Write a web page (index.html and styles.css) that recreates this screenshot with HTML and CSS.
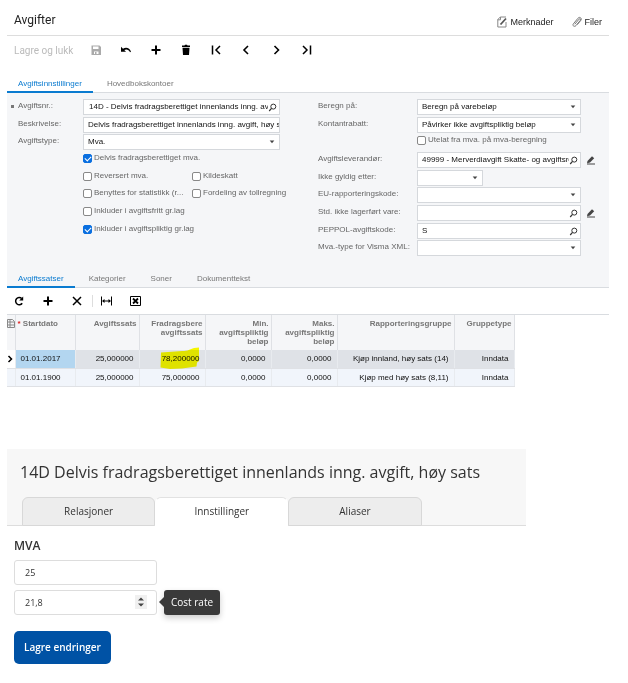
FILE: index.html
```html
<!DOCTYPE html>
<html lang="no">
  <head>
    <meta charset="UTF-8" />
    <meta name="viewport" content="width=device-width, initial-scale=1.0" />
    <title>Avgifter</title>
    <link rel="stylesheet" href="styles.css">
  </head>
  <body>
    <svg class="sprite" aria-hidden="true">
      <symbol id="search" viewBox="0 0 9 9">
        <circle cx="5.3" cy="3.6" r="2.5" fill="none" stroke="#333" stroke-width="1" />
        <path d="M3.5 5.4 1.2 8" stroke="#333" stroke-width="1.2" />
      </symbol>
      <symbol id="pencil" viewBox="0 0 10 10">
        <path d="M1.5 6 6 1.2 8.2 3.2 4 7.6 1 8.2z" fill="#444" />
        <path d="M1 9h8" stroke="#444" stroke-width="1" />
      </symbol>
      <symbol id="plus" viewBox="0 0 12 12">
        <path d="M6 1.5v9M1.5 6h9" stroke="#000" stroke-width="2" />
      </symbol>
      <symbol id="caret" viewBox="0 0 6 4">
        <path d="M.7.5h4.6L3 3.3z" fill="#444" />
      </symbol>
    </svg>

    <main class="tax">
      <header class="tax-header">
        <h1>Avgifter</h1>
        <a href="#" class="header-link">
          <svg width="10" height="12" viewBox="0 0 10 12" fill="none" stroke="#888">
            <path d="M9 6v5H.8V3.5L3.3 1H9M.8 3.8h2.7V1" />
            <path d="M3.5 8.5 9 2.5" stroke="#555" stroke-width="1.8" />
          </svg>
          Merknader
        </a>
        <a href="#" class="header-link">
          <svg width="10" height="12" viewBox="0 0 10 12" fill="none" stroke="#777">
            <path d="M2.8 8.2 7 3.2c1-1 2.2 0 1.3 1.2L4 9.6c-1.6 1.7-4 .1-2.6-1.8L6 2.2C7.7.2 10.3 2.3 8.8 4.4L5.3 8.6" />
          </svg>
          Filer
        </a>
      </header>

      <div class="toolbar">
        <button class="save-close" disabled>Lagre og lukk</button>
        <button class="tool" disabled aria-label="Lagre">
          <svg width="12" height="12" viewBox="0 0 12 12">
            <path d="M1.5 1.5h8L11 3v8H1.5z" fill="#aaa" />
            <path d="M3 2.5h5.5V5H3zM4 7.5h4.5V10H4z" fill="#fff" />
            <path d="M5 8h1.5v2H5z" fill="#aaa" />
          </svg>
        </button>
        <button class="tool" aria-label="Angre">
          <svg width="12" height="12" viewBox="0 0 12 12">
            <path d="M1 2.8v5h5L4.3 6c2-1.2 4.6-.6 5.7 2.3l1-.6C9.8 4 6 2.8 3 4.8z" />
          </svg>
        </button>
        <button class="tool" aria-label="Ny"><svg width="12" height="12"><use href="#plus" /></svg></button>
        <button class="tool" aria-label="Slett">
          <svg width="12" height="12" viewBox="0 0 12 12">
            <path d="M2 1.6h2.5l.5-.8h2l.5.8H10V3H2zM2.5 3.7h7L9 11H3z" />
          </svg>
        </button>
        <button class="tool" aria-label="Første">
          <svg width="12" height="12" viewBox="0 0 12 12" fill="none" stroke="#000" stroke-width="1.5">
            <path d="M2.5 1.5v9M10 2 6 6l4 4" />
          </svg>
        </button>
        <button class="tool" aria-label="Forrige">
          <svg width="12" height="12" viewBox="0 0 12 12" fill="none" stroke="#000" stroke-width="1.6">
            <path d="M8 2 4 6l4 4" />
          </svg>
        </button>
        <button class="tool" aria-label="Neste">
          <svg width="12" height="12" viewBox="0 0 12 12" fill="none" stroke="#000" stroke-width="1.6">
            <path d="M4.5 2l4 4-4 4" />
          </svg>
        </button>
        <button class="tool" aria-label="Siste">
          <svg width="12" height="12" viewBox="0 0 12 12" fill="none" stroke="#000" stroke-width="1.5">
            <path d="M3 2l4 4-4 4M10.5 1.5v9" />
          </svg>
        </button>
      </div>

      <nav class="tabs">
        <a href="#" class="tab active">Avgiftsinnstillinger</a>
        <a href="#" class="tab">Hovedbokskontoer</a>
      </nav>

      <form class="settings">
        <div class="fields fields-left">
          <label for="number" class="required">Avgiftsnr.:</label>
          <div class="field">
            <input id="number" class="indent" value="14D - Delvis fradragsberettiget innenlands inng. avgift" />
            <button type="button" aria-label="Søk"><svg width="9" height="9"><use href="#search" /></svg></button>
          </div>
          <label for="description">Beskrivelse:</label>
          <div class="field">
            <input id="description" value="Delvis fradragsberettiget innenlands inng. avgift, høy sats" />
          </div>
          <label for="type">Avgiftstype:</label>
          <div class="field">
            <select id="type"><option>Mva.</option></select>
            <svg class="caret" width="6" height="4"><use href="#caret" /></svg>
          </div>
          <div class="checks"><label><input type="checkbox" checked />Delvis fradragsberettiget mva.</label></div>
          <div class="checks">
            <label><input type="checkbox" />Reversert mva.</label>
            <label><input type="checkbox" />Kildeskatt</label>
          </div>
          <div class="checks">
            <label><input type="checkbox" />Benyttes for statistikk (r...</label>
            <label><input type="checkbox" />Fordeling av tollregning</label>
          </div>
          <div class="checks"><label><input type="checkbox" />Inkluder i avgiftsfritt gr.lag</label></div>
          <div class="checks"><label><input type="checkbox" checked />Inkluder i avgiftspliktig gr.lag</label></div>
        </div>

        <div class="fields fields-right">
          <label for="basis">Beregn på:</label>
          <div class="field">
            <select id="basis"><option>Beregn på varebeløp</option></select>
            <svg class="caret" width="6" height="4"><use href="#caret" /></svg>
          </div>
          <label for="discount">Kontantrabatt:</label>
          <div class="field">
            <select id="discount"><option>Påvirker ikke avgiftspliktig beløp</option></select>
            <svg class="caret" width="6" height="4"><use href="#caret" /></svg>
          </div>
          <div class="checks"><label><input type="checkbox" />Utelat fra mva. på mva-beregning</label></div>
          <label for="vendor">Avgiftsleverandør:</label>
          <div class="field">
            <input id="vendor" value="49999 - Merverdiavgift Skatte- og avgiftsregnskap" />
            <button type="button" aria-label="Søk"><svg width="9" height="9"><use href="#search" /></svg></button>
          </div>
          <button type="button" class="edit" aria-label="Rediger"><svg width="10" height="10"><use href="#pencil" /></svg></button>
          <label for="expires">Ikke gyldig etter:</label>
          <div class="field field-date">
            <input id="expires" />
            <button type="button" aria-label="Velg dato"><svg class="caret" width="6" height="4"><use href="#caret" /></svg></button>
          </div>
          <label for="eu">EU-rapporteringskode:</label>
          <div class="field">
            <select id="eu"><option></option></select>
            <svg class="caret" width="6" height="4"><use href="#caret" /></svg>
          </div>
          <label for="item">Std. ikke lagerført vare:</label>
          <div class="field">
            <input id="item" />
            <button type="button" aria-label="Søk"><svg width="9" height="9"><use href="#search" /></svg></button>
          </div>
          <button type="button" class="edit" aria-label="Rediger"><svg width="10" height="10"><use href="#pencil" /></svg></button>
          <label for="peppol">PEPPOL-avgiftskode:</label>
          <div class="field">
            <input id="peppol" value="S" />
            <button type="button" aria-label="Søk"><svg width="9" height="9"><use href="#search" /></svg></button>
          </div>
          <label for="xml">Mva.-type for Visma XML:</label>
          <div class="field">
            <select id="xml"><option></option></select>
            <svg class="caret" width="6" height="4"><use href="#caret" /></svg>
          </div>
        </div>
      </form>

      <nav class="tabs tabs-rates">
        <a href="#" class="tab active">Avgiftssatser</a>
        <a href="#" class="tab">Kategorier</a>
        <a href="#" class="tab">Soner</a>
        <a href="#" class="tab">Dokumenttekst</a>
      </nav>

      <div class="grid-toolbar">
        <button class="tool" aria-label="Oppdater">
          <svg width="12" height="12" viewBox="0 0 12 12">
            <path d="M9.2 8.2A3.6 3.6 0 1 1 8.7 3.5" fill="none" stroke="#000" stroke-width="1.5" />
            <path d="M10.2 1.5v4h-4z" />
          </svg>
        </button>
        <button class="tool" aria-label="Legg til"><svg width="12" height="12"><use href="#plus" /></svg></button>
        <button class="tool" aria-label="Fjern">
          <svg width="12" height="12" viewBox="0 0 12 12"><path d="M2 2l8 8M10 2l-8 8" stroke="#000" stroke-width="1.5" /></svg>
        </button>
        <button class="tool tool-split" aria-label="Tilpass bredde">
          <svg width="12" height="12" viewBox="0 0 12 12">
            <path d="M.5 1.5v9M10.5 1.5v9M3 6h6" stroke="#000" fill="none" />
            <path d="M1 6l2.500-2v4zM10 6 7.5 4v4z" />
          </svg>
        </button>
        <button class="tool" aria-label="Eksporter til Excel">
          <svg width="12" height="12" viewBox="0 0 12 12">
            <path d="M.5 1.5h10v9H.5z" fill="none" stroke="#000" />
            <path d="M3 3.500l5 5M8 3.500l-5 5" stroke="#000" stroke-width="1.8" />
          </svg>
        </button>
      </div>

      <div class="grid-wrap">
        <table class="rates">
          <colgroup>
            <col class="c-mark" /><col class="c-date" /><col class="c-rate" /><col class="c-amount" />
            <col class="c-amount" /><col class="c-amount" /><col class="c-group" /><col class="c-date" />
          </colgroup>
          <thead>
            <tr>
              <th class="mark">
                <svg width="8" height="9" viewBox="0 0 8 9" fill="none" stroke="#888">
                  <path d="M.5.5h5l2 2v6h-7zM.5 3h7M.5 6h7M3 .5v8" />
                </svg>
              </th>
              <th class="start"><span class="star">*</span> Startdato</th>
              <th>Avgiftssats</th>
              <th>Fradragsbere avgiftssats</th>
              <th>Min. avgiftspliktig beløp</th>
              <th>Maks. avgiftspliktig beløp</th>
              <th>Rapporteringsgruppe</th>
              <th>Gruppetype</th>
            </tr>
          </thead>
          <tbody>
            <tr class="selected">
              <td class="mark">
                <svg width="6" height="8" viewBox="0 0 6 8"><path d="M1.5 1l3 3-3 3" fill="none" stroke="#000" stroke-width="1.5" /></svg>
              </td>
              <td class="start">01.01.2017</td>
              <td>25,000000</td>
              <td class="marked">
                78,200000
                <svg class="marker" width="41" height="24" viewBox="0 0 41 24">
                  <path d="M1 5.5 22 4c6 0 8-1.5 12-3l5-.5V14l-2 1.5-.5 4L22 21.500 10 22 .5 20.500z" fill="#ffff00" />
                </svg>
              </td>
              <td>0,0000</td>
              <td>0,0000</td>
              <td>Kjøp innland, høy sats (14)</td>
              <td>Inndata</td>
            </tr>
            <tr>
              <td class="mark"></td>
              <td class="start">01.01.1900</td>
              <td>25,000000</td>
              <td>75,000000</td>
              <td>0,0000</td>
              <td>0,0000</td>
              <td>Kjøp med høy sats (8,11)</td>
              <td>Inndata</td>
            </tr>
          </tbody>
        </table>
      </div>
    </main>

    <section class="product">
      <header class="product-header">
        <h2>14D Delvis fradragsberettiget innenlands inng. avgift, høy sats</h2>
        <nav class="product-tabs">
          <a href="#">Relasjoner</a>
          <a href="#" class="active">Innstillinger</a>
          <a href="#">Aliaser</a>
        </nav>
      </header>
      <form class="product-form">
        <h3>MVA</h3>
        <div class="box">
          <input aria-label="MVA" value="25" />
        </div>
        <div class="cost-row">
          <div class="box">
            <input id="cost" value="21,8" />
            <button type="button" class="spinner" aria-label="Endre verdi">
              <svg width="6" height="10" viewBox="0 0 6 10"><path d="M0 3.5 3 .5l3 3zM0 6.500h6l-3 3z" fill="#444" /></svg>
            </button>
          </div>
          <label for="cost" class="tip">Cost rate</label>
        </div>
        <button type="button" class="submit">Lagre endringer</button>
      </form>
    </section>
  </body>
</html>
```

FILE: styles.css
```css
* {
  box-sizing: border-box;
}
body {
  margin: 0;
  font-family: "Liberation Sans", Arial, sans-serif;
  font-size: 8px;
  color: #222;
  background-color: #fff;
}
a {
  color: inherit;
  text-decoration: none;
}
button {
  padding: 0;
  border: none;
  background: none;
  font: inherit;
  cursor: pointer;
}
svg {
  display: block;
  flex: none;
}
.sprite {
  position: absolute;
  width: 0;
  height: 0;
}
.tax {
  margin: 0 19px 0 7px;
}
.tax-header {
  display: flex;
  align-items: center;
  gap: 18px;
  height: 36px;
  padding: 9px 7px 0 7px;
  border-bottom: 1px solid #ddd;
}
h1 {
  flex: 1;
  margin: 0 0 4px;
  font-family: Roboto, sans-serif;
  font-size: 12px;
  font-weight: 400;
}
.header-link {
  display: flex;
  align-items: center;
  gap: 3px;
  font-size: 9px;
}
.toolbar {
  display: flex;
  align-items: center;
  gap: 18px;
  height: 28px;
  padding-left: 7px;
}
.save-close {
  width: 58px;
  font-family: Roboto, sans-serif;
  font-size: 10px;
  color: #bbb;
  text-align: left;
  white-space: nowrap;
}
.tabs {
  display: flex;
  height: 29px;
  border-bottom: 1px solid #d9dce0;
  align-items: flex-end;
}
.tab {
  padding: 0 11px 2px;
  margin-bottom: -1px;
  border-bottom: 2px solid transparent;
  line-height: 10px;
  color: #777;
}
.tab + .tab {
  margin-left: 3px;
}
.tab.active {
  color: #0a7bd0;
  border-bottom-color: #0a7bd0;
}
.settings {
  display: grid;
  grid-template-columns: minmax(0, 311fr) minmax(0, 291fr);
  padding: 6px 0 9px;
  background-color: #f5f6f8;
}
.fields {
  display: grid;
  grid-auto-rows: 18px 17px 18px;
  align-content: start;
  align-items: start;
}
.fields-left {
  grid-template-columns: 65px minmax(0, 1fr);
  padding: 0 38px 0 11px;
}
.fields-right {
  grid-template-columns: 99px minmax(0, 1fr) 28px;
}
.fields > label {
  grid-column: 1;
  line-height: 14px;
  color: #666;
  white-space: nowrap;
}
.required::before {
  content: "";
  float: left;
  width: 3px;
  height: 3px;
  margin: 6px 0 0 -7px;
  background-color: #777;
}
.field {
  grid-column: 2;
  display: flex;
  align-items: center;
  height: 16px;
  border: 1px solid #d5d8dc;
  background-color: #fff;
}
.field-date {
  width: 66px;
}
.field input,
.field select {
  flex: 1;
  min-width: 0;
  height: 14px;
  padding: 0 0 1px 4px;
  border: none;
  background: none;
  font: inherit;
  color: #111;
  outline: none;
  appearance: none;
}
.field .indent {
  padding-left: 5px;
}
.field button {
  padding: 2px 2px 2px 0;
}
.caret {
  margin-right: 4px;
}
.field button .caret {
  margin-right: 2px;
}
.edit {
  grid-column: 3;
  margin: 3px 0 0 5px;
}
.checks {
  grid-column: 2;
  display: grid;
  grid-template-columns: 109px 1fr;
  color: #666;
  white-space: nowrap;
}
.checks label {
  display: flex;
  gap: 2px;
  line-height: 12px;
}
.checks input {
  flex: none;
  width: 9px;
  height: 9px;
  margin: 2px 0 0;
  border: 1px solid #888;
  border-radius: 2px;
  background-color: #fff;
  appearance: none;
}
.checks input:checked {
  border-color: #0a6fe0;
  background-color: #0a6fe0;
}
.checks input:checked::before {
  content: "";
  display: block;
  width: 3px;
  height: 5px;
  margin-left: 2px;
  border: solid #fff;
  border-width: 0 1px 1px 0;
  transform: rotate(45deg);
}
.tabs-rates {
  height: 21px;
  background-color: #f5f6f8;
}
.grid-toolbar {
  display: flex;
  align-items: center;
  gap: 17px;
  height: 26px;
  padding-left: 6px;
}
.tool-split {
  margin-left: -8px;
  padding-left: 8px;
  border-left: 1px solid #ddd;
}
.grid-wrap {
  border-top: 1px solid #d9dce0;
}
.rates {
  width: 507px;
  table-layout: fixed;
  border-collapse: collapse;
}
.c-mark {
  width: 8px;
}
.c-date {
  width: 60px;
}
.c-rate {
  width: 64px;
}
.c-amount {
  width: 66px;
}
.c-group {
  width: 117px;
}
.rates th {
  height: 35px;
  padding: 4px 2px 0;
  border-right: 1px solid #dfe1e5;
  background-color: #f5f6f8;
  color: #777;
  line-height: 9px;
  text-align: right;
  vertical-align: top;
}
.rates td {
  height: 18px;
  padding: 0 5px;
  border-right: 1px solid #e8ebef;
  border-bottom: 1px solid #dfe1e5;
  background-color: #f1f5fb;
  color: #111;
  text-align: right;
  white-space: nowrap;
}
.rates .selected td {
  background-color: #dfe2e7;
}
.rates .start {
  text-align: left;
}
.rates .selected .start {
  background-color: #b3d6f0;
}
.rates .mark,
.rates .selected .mark {
  padding-left: 0;
  padding-right: 0;
}
.rates .selected .mark {
  background-color: #fff;
}
.star {
  color: #e02020;
}
.marked {
  position: relative;
}
.marker {
  position: absolute;
  top: -3px;
  left: 20px;
  mix-blend-mode: multiply;
}
.product {
  margin: 62px 102px 0 7px;
  font-family: "Open Sans", sans-serif;
  color: #333;
}
.product-header {
  padding-top: 12px;
  border-bottom: 1px solid #ddd;
  background-color: #f7f7f7;
}
h2 {
  margin: 0 0 14px 13px;
  font-size: 16px;
  font-weight: 400;
  line-height: 22px;
}
.product-tabs {
  display: flex;
  width: 77%;
  margin: 0 0 -1px 15px;
}
.product-tabs a {
  flex: 1;
  border: 1px solid #d8d8d8;
  border-radius: 6px 6px 0 0;
  background-color: #ededed;
  font-size: 10px;
  line-height: 27px;
  text-align: center;
}
.product-tabs .active {
  border-color: #e2e2e2 transparent #fff;
  background-color: #fff;
}
.product-form {
  padding: 11px 7px;
}
h3 {
  margin: 0 0 5px;
  font-size: 12px;
  font-weight: 600;
  line-height: 18px;
}
.box {
  display: flex;
  align-items: center;
  width: 143px;
  height: 25px;
  padding: 0 9px 0 10px;
  border: 1px solid #ddd;
  border-radius: 3px;
}
.box input {
  flex: 1;
  min-width: 0;
  padding: 0;
  border: none;
  font: inherit;
  font-size: 9px;
  color: #333;
  outline: none;
}
.spinner {
  padding: 2px 3px;
  background-color: #f0f0f0;
}
.cost-row {
  display: flex;
  margin-top: 5px;
}
.tip {
  position: relative;
  margin-left: 7px;
  padding: 0 7px;
  border-radius: 3px;
  background-color: #3a3a3a;
  box-shadow: 0 3px 6px rgba(0, 0, 0, 0.2);
  color: #fff;
  font-size: 10px;
  line-height: 25px;
}
.tip::before {
  content: "";
  position: absolute;
  top: 7px;
  left: -5px;
  border: solid transparent;
  border-width: 5px 5px 5px 0;
  border-right-color: #3a3a3a;
}
.submit {
  margin-top: 16px;
  padding: 0 10px;
  border-radius: 5px;
  background-color: #0052a5;
  color: #fff;
  font-size: 10px;
  font-weight: 600;
  line-height: 33px;
}
```
